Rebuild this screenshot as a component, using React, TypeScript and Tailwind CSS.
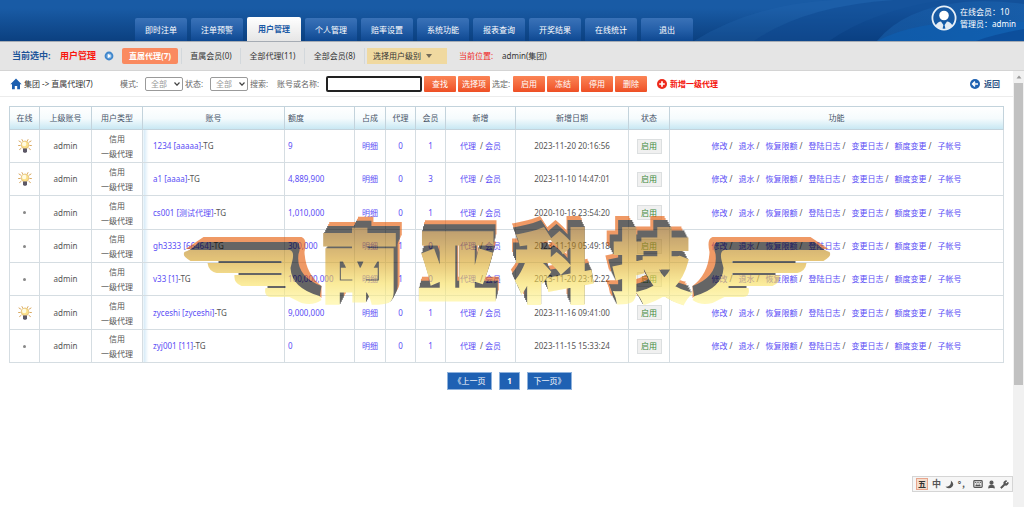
import type { ReactNode } from 'react'
import { User, Wrench, Keyboard } from 'lucide-react'

const tabs = ['即时注单', '注单预警', '用户管理', '个人管理', '赔率设置', '系统功能', '报表查询', '开奖结果', '在线统计', '退出']

const functions = ['修改', '退水', '恢复限额', '登陆日志', '变更日志', '额度变更', '子帐号']

interface Agent {
  online: boolean
  account: string
  quota: string
  agents: number
  members: number
  created: string
}

const agents: Agent[] = [
  { online: true, account: '1234 [aaaaa]', quota: '9', agents: 0, members: 1, created: '2023-11-20 20:16:56' },
  { online: true, account: 'a1 [aaaa]', quota: '4,889,900', agents: 0, members: 3, created: '2023-11-10 14:47:01' },
  { online: false, account: 'cs001 [测试代理]', quota: '1,010,000', agents: 0, members: 1, created: '2020-10-16 23:54:20' },
  { online: false, account: 'gh3333 [66464]', quota: '300,000', agents: 1, members: 0, created: '2023-11-19 05:49:18' },
  { online: false, account: 'v33 [1]', quota: '100,000,000', agents: 1, members: 0, created: '2023-11-20 23:12:22' },
  { online: true, account: 'zyceshi [zyceshi]', quota: '9,000,000', agents: 0, members: 1, created: '2023-11-16 09:41:00' },
  { online: false, account: 'zyj001 [11]', quota: '0', agents: 0, members: 1, created: '2023-11-15 15:33:24' },
]

const columns = [
  { title: '在线', width: 'w-[30px]' },
  { title: '上级账号', width: 'w-[52px]' },
  { title: '用户类型', width: 'w-[51px]' },
  { title: '账号', width: 'w-[142px]' },
  { title: '额度', width: 'w-[70px]' },
  { title: '占成', width: 'w-[31px]' },
  { title: '代理', width: 'w-[30px]' },
  { title: '会员', width: 'w-[30px]' },
  { title: '新增', width: 'w-[70px]' },
  { title: '新增日期', width: 'w-[113px]' },
  { title: '状态', width: 'w-[41px]' },
  { title: '功能', width: '' },
]

function Link({ children }: { children: ReactNode }) {
  return (
    <a href="#" className="text-[#5a4df5]">
      {children}
    </a>
  )
}

function Bulb() {
  return (
    <svg viewBox="0 0 14 14" className="mx-auto size-[14px]">
      <g stroke="#d9a860" strokeWidth="1" strokeLinecap="round">
        <path d="M1 2l1.6 1M.6 6.5h1.6M1.6 10.5l1.4-1M13 2l-1.6 1M13.4 6.5h-1.6M12.4 10.5l-1.4-1M4 .6l.5 1M10 .6l-.5 1" />
      </g>
      <circle cx="7" cy="5.8" r="3.9" fill="#fbe08a" stroke="#d8b070" strokeWidth=".6" />
      <circle cx="6.2" cy="5" r="2.2" fill="#fffbe2" />
      <path d="M5 9.4h4v2.8L8.200 13.800H5.800L5 12.200z" fill="#5c5866" />
    </svg>
  )
}

function HeaderBackdrop() {
  return (
    <svg viewBox="0 0 400 41" preserveAspectRatio="none" className="absolute top-0 right-0 h-full w-[400px]">
      <defs>
        <linearGradient id="swoosh" x1="0" y1="0" x2="1" y2="1">
          <stop offset="0" stopColor="#1d63ad" stopOpacity=".3" />
          <stop offset="1" stopColor="#1c6dbd" stopOpacity=".65" />
        </linearGradient>
      </defs>
      <path d="M70 41Q130 4 210 0H320Q250 10 205 41z" fill="#2468b0" opacity=".3" />
      <path d="M130 41Q180 6 270 0H400V41z" fill="#0a4088" opacity=".35" />
      <path d="M253 41Q280 8 340 2Q370 0 400 4V41z" fill="url(#swoosh)" />
      <path d="M253 41Q300 16 400 22V41z" fill="#0c61b8" opacity=".5" />
      <path d="M352 41Q372 34 400 29V41z" fill="#0a4590" opacity=".6" />
    </svg>
  )
}

function Header() {
  return (
    <header className="relative flex h-[42px] items-end justify-between border-b border-[#a6acb4] bg-linear-to-b from-[#195ba5] from-20% to-[#0b4080]">
      <HeaderBackdrop />
      <nav className="relative ml-[135px] flex items-end gap-1">
        {tabs.map((tab) =>
          tab === '用户管理' ? (
            <a key={tab} href="#" className="flex h-[24px] w-[54px] items-center justify-center rounded-t-xs bg-linear-to-b from-white to-[#e6e6e6] font-bold text-[#1d5ba6]">
              {tab}
            </a>
          ) : (
            <a key={tab} href="#" className="flex h-[23px] w-[52px] items-center justify-center rounded-t-xs bg-linear-to-b from-[#3a72b8] via-[#2560a9] via-50% to-[#0e4891] text-white">
              {tab}
            </a>
          ),
        )}
      </nav>
      <div className="relative flex items-center gap-[3px] self-start pt-[5px] pr-[8px] text-white">
        <svg viewBox="0 0 26 26" className="size-[26px]">
          <circle cx="13" cy="13" r="11.6" fill="none" stroke="#e8f0f8" strokeWidth="1.8" />
          <circle cx="13" cy="10.5" r="4.8" fill="#fff" />
          <path d="M4.5 20.5Q7 16.5 10 16.5L12.4 20L11.4 24.6Q7 24 4.5 20.5zM21.5 20.5Q19 16.5 16 16.5L13.6 20L14.6 24.6Q19 24 21.5 20.5z" fill="#e3ebf4" />
        </svg>
        <div className="leading-[12px]">
          <p>在线会员：10</p>
          <p>管理员：admin</p>
        </div>
      </div>
    </header>
  )
}

function SubNav() {
  return (
    <div className="flex h-[29px] items-center border-b border-[#d4d4d4] bg-[#e5e5e5] pb-[1px] pl-[12px] text-[#333]">
      <span className="w-[48px] text-[9px] font-bold text-[#1d5499]">当前选中:</span>
      <span className="text-[9px] font-bold text-[#f9150c]">用户管理</span>
      <svg viewBox="0 0 10 10" className="ml-[8px] size-[10px]">
        <circle cx="5" cy="5" r="4.4" fill="#3f86cc" />
        <circle cx="5" cy="5" r="2.5" fill="#8fbde6" />
        <path d="M4 3l3 2-3 2z" fill="#fff" />
      </svg>
      <nav className="ml-[8px] flex items-center">
        <a href="#" className="flex h-[16px] w-[56px] items-center justify-center rounded-xs bg-[#fa8a60] font-bold text-white">直属代理(7)</a>
        <a href="#" className="ml-[3px] w-[59px] border-l border-[#d3d8dc] text-center leading-[16px]">直属会员(0)</a>
        <a href="#" className="w-[64px] border-l border-[#d3d8dc] text-center leading-[16px]">全部代理(11)</a>
        <a href="#" className="w-[60px] border-l border-[#d3d8dc] text-center leading-[16px]">全部会员(8)</a>
      </nav>
      <div className="border-l border-[#d3d8dc] pl-[2px]">
        <button className="flex h-[16px] w-[80px] items-center gap-[5px] bg-[#f0d9a0] pl-[6px]">
          选择用户级别
          <svg viewBox="0 0 6 4" className="h-[4px] w-[6px]">
            <path d="M0 0h6L3 4z" fill="#736b57" />
          </svg>
        </button>
      </div>
      <span className="ml-[12px] w-[43px] text-[#f0231c]">当前位置:</span>
      <span>admin(集团)</span>
    </div>
  )
}

function ActionButton({ children }: { children: ReactNode }) {
  return (
    <button className="h-[16px] w-[32px] rounded-[1px] bg-linear-to-b from-[#fb8455] to-[#ee4f24] text-white">
      {children}
    </button>
  )
}

function FilterSelect({ id }: { id: string }) {
  return (
    <span className="relative flex items-center">
      <select id={id} className="h-[14px] w-[38px] appearance-none rounded-xs border border-[#9a9a9a] bg-white pl-[5px] text-[#999]">
        <option>全部</option>
      </select>
      <svg viewBox="0 0 6 4" className="pointer-events-none absolute right-[3px] h-[4px] w-[6px]">
        <path d="M.5.5L3 3.2L5.5.5" fill="none" stroke="#444" strokeWidth="1.2" />
      </svg>
    </span>
  )
}

function Toolbar() {
  return (
    <form className="flex h-[26px] items-center border-b border-[#ececec] pr-[13px] pl-[10px] text-[#666]">
      <svg viewBox="0 0 12 12" className="size-[12px]">
        <path d="M6 .6L11.6 6.2H10V11.2H7.2V8H4.8V11.2H2V6.2H.4z" fill="#1c5fb0" />
      </svg>
      <span className="ml-[2px] w-[96px] text-[#333]">集团 -&gt; 直属代理(7)</span>
      <label htmlFor="mode" className="w-[25px]">模式:</label>
      <FilterSelect id="mode" />
      <label htmlFor="status" className="ml-[2px] w-[25px]">状态:</label>
      <FilterSelect id="status" />
      <span className="ml-[2px] w-[27px]">搜索:</span>
      <label htmlFor="keyword" className="w-[49px]">账号或名称:</label>
      <input id="keyword" type="text" className="h-[16px] w-[96px] rounded-xs border-2 border-[#222] bg-white px-1" />
      <div className="ml-[2px] flex items-center gap-[2px]">
        <ActionButton>查找</ActionButton>
        <ActionButton>选择项</ActionButton>
        <span className="w-[19px]">选定:</span>
        <ActionButton>启用</ActionButton>
        <ActionButton>冻结</ActionButton>
        <ActionButton>停用</ActionButton>
        <ActionButton>删除</ActionButton>
      </div>
      <a href="#" className="ml-[10px] flex items-center gap-[3px] font-bold text-[#f5140c]">
        <svg viewBox="0 0 10 10" className="size-[10px]">
          <circle cx="5" cy="5" r="5" fill="#ee2a1c" />
          <path d="M5 2.2v5.6M2.2 5h5.6" stroke="#fff" strokeWidth="1.7" />
        </svg>
        新增一级代理
      </a>
      <a href="#" className="ml-auto flex items-center gap-[4px] font-bold text-[#2d5486]">
        <svg viewBox="0 0 10 10" className="size-[10px]">
          <circle cx="5" cy="5" r="5" fill="#1f62b2" />
          <path d="M8 5H3M5 2.6L2.6 5L5 7.4" fill="none" stroke="#fff" strokeWidth="1.5" />
        </svg>
        返回
      </a>
    </form>
  )
}

function AgentTable() {
  return (
    <table className="w-full table-fixed border-collapse text-center text-[#555] [&_td]:border [&_td]:border-[#d5dde2] [&_th]:border [&_th]:border-[#c3d3dc]">
      <thead>
        <tr className="h-[23px] bg-linear-to-b from-white via-[#f5fbfd] to-[#c4e6f2] text-[#475468]">
          {columns.map(({ title, width }) => (
            <th key={title} className={`${width} font-normal ${title === '额度' ? 'pl-[3px] text-left' : ''}`}>
              {title}
            </th>
          ))}
        </tr>
      </thead>
      <tbody>
        {agents.map((agent) => (
          <tr key={agent.account} className="h-[33px] nth-[3n]:h-[34px]">
            <td>{agent.online ? <Bulb /> : <span className="mx-auto block size-[3px] rounded-full bg-[#888]" />}</td>
            <td>admin</td>
            <td className="leading-[15px]">
              信用
              <br />
              一级代理
            </td>
            <td className="bg-linear-to-r from-[#d3e9f6] to-white to-[5px] pl-[10px] text-left">
              <Link>{agent.account}</Link>-TG
            </td>
            <td className="pl-[3px] text-left">
              <Link>{agent.quota}</Link>
            </td>
            <td>
              <Link>明细</Link>
            </td>
            <td>
              <Link>{agent.agents}</Link>
            </td>
            <td>
              <Link>{agent.members}</Link>
            </td>
            <td>
              <Link>代理</Link>&nbsp; / <Link>会员</Link>
            </td>
            <td>{agent.created}</td>
            <td>
              <button className="h-[15px] w-[25px] border border-[#dcdfe0] bg-[#f0f0f0] text-[#3d8a3d]">启用</button>
            </td>
            <td>
              <div className="flex justify-center gap-[6px]">
                {functions.map((name, i) => (
                  <span key={name}>
                    <Link>{name}</Link>
                    {i < functions.length - 1 && <span className="pl-[2px]">/</span>}
                  </span>
                ))}
              </div>
            </td>
          </tr>
        ))}
      </tbody>
    </table>
  )
}

// each letter leans towards the middle of the sign
const signLetters = [
  { id: 'nan', char: '南', x: 176, lean: 6 },
  { id: 'ya', char: '亚', x: 274, lean: 3 },
  { id: 'ke', char: '科', x: 371, lean: -4 },
  { id: 'ji', char: '技', x: 468, lean: -7 },
]

// back to front: orange slices, then dark ones
const slices = [
  { depth: 11, color: '#e65700' },
  { depth: 9, color: '#e65700' },
  { depth: 7, color: '#000' },
  { depth: 5, color: '#000' },
  { depth: 3, color: '#000' },
  { depth: 1, color: '#000' },
]

function Extrusion({ id, lean }: { id: string; lean: number }) {
  return (
    <filter id={id} x="-20%" y="-20%" width="140%" height="140%" colorInterpolationFilters="sRGB">
      {slices.map(({ depth, color }) => [
        <feOffset key={`o${depth}`} in="SourceAlpha" dx={(lean * depth) / 11} dy={-depth} result={`shape${depth}`} />,
        <feFlood key={`f${depth}`} floodColor={color} />,
        <feComposite key={`c${depth}`} in2={`shape${depth}`} operator="in" result={`side${depth}`} />,
      ])}
      <feMerge>
        {slices.map(({ depth }) => (
          <feMergeNode key={depth} in={`side${depth}`} />
        ))}
        <feMergeNode in="SourceGraphic" />
      </feMerge>
    </filter>
  )
}

function Wing() {
  return (
    <>
      <path d="M2 31L20 19H118Q124 21 121 34Q122 56 138 68V80L112 60L108 32z" fill="#e65700" />
      <path d="M1 36L16 24H114Q118 27 115 36Q112 58 138 68L136 80Q108 78 106 56V40z" fill="#000" />
      <path
        d="M6 32H106Q111 33 109 42L107 50Q108 70 136 78L138 82Q130 88 118 85L106 79H87Q80 78 82 70H102V68H58Q50 65 51 57H98V55H33Q25 53 24 45H98V43H7Q-2 38 1 34z"
        fill="url(#signGold)"
      />
      <path d="M35 44H98M55 56H98M84 69H102" stroke="#000" strokeWidth="2" />
    </>
  )
}

function GoldSign() {
  return (
    <svg viewBox="0 -24 647 130" className="pointer-events-none absolute top-[123px] left-1/2 w-[647px] -translate-x-1/2 opacity-60">
      <defs>
        <linearGradient id="signGold" gradientUnits="userSpaceOnUse" x1="0" y1="10" x2="0" y2="84">
          <stop offset="0" stopColor="#8f5a10" />
          <stop offset=".45" stopColor="#d6a020" />
          <stop offset=".75" stopColor="#f8de58" />
          <stop offset="1" stopColor="#fff490" />
        </linearGradient>
        {signLetters.map(({ id, lean }) => (
          <Extrusion key={id} id={id} lean={lean} />
        ))}
      </defs>
      <Wing />
      <g transform="matrix(-1 0 0 1 647 0)">
        <Wing />
      </g>
      <g textAnchor="middle" fill="url(#signGold)" stroke="url(#signGold)" strokeWidth="3" className="font-['Noto_Sans_CJK_SC',sans-serif] text-[78px] font-black">
        {signLetters.map(({ id, char, x }) => (
          <text key={id} x={x} y="78" filter={`url(#${id})`}>
            {char}
          </text>
        ))}
      </g>
    </svg>
  )
}

function Pagination() {
  return (
    <nav className="mt-[9px] flex justify-center gap-[7px] pl-[6px] text-white">
      <a href="#" className="flex h-[18px] w-[45px] items-center justify-center border border-[#8fb2dc] bg-[#1f61b3]">《上一页</a>
      <a href="#" className="flex h-[18px] w-[21px] items-center justify-center border border-[#8fb2dc] bg-[#1f61b3] font-bold">1</a>
      <a href="#" className="flex h-[18px] w-[45px] items-center justify-center border border-[#8fb2dc] bg-[#1f61b3]">下一页》</a>
    </nav>
  )
}

function InputMethodBar() {
  return (
    <div className="absolute right-0 bottom-[15px] flex h-[16px] w-[101px] items-center justify-between border border-[#d5d5d5] bg-[#f6f6f6] px-[3px] text-[#555]">
      <span className="flex size-[12px] items-center justify-center border border-[#e8a58c] bg-[#f3dccb] font-bold text-[#333]">五</span>
      <span className="text-[9px] font-bold">中</span>
      <svg viewBox="0 0 10 10" className="size-[9px]">
        <path d="M6.5.5Q11 4 8 7.5Q4.5 11 .5 7.5Q7.5 7.5 6.5.5z" fill="#555" />
      </svg>
      <span className="font-bold">°，</span>
      <Keyboard className="size-[10px]" strokeWidth={3} />
      <User className="size-[9px] fill-current" strokeWidth={3} />
      <Wrench className="size-[9px] fill-current" />
    </div>
  )
}

function ScrollTrack() {
  return (
    <div className="flex w-[11px] flex-col items-center bg-[#f1f1f1]">
      <svg viewBox="0 0 6 12" className="h-[12px] w-[6px]">
        <path d="M.5 7.5h5L3 4.5z" fill="#999" />
      </svg>
      <div className="h-[302px] w-[9px] bg-[#c1c1c1]" />
    </div>
  )
}

export default function App() {
  return (
    <div className="flex min-h-screen flex-col bg-white font-['Noto_Sans','Noto_Sans_CJK_SC',sans-serif] text-[8px] leading-[12px] whitespace-nowrap">
      <Header />
      <SubNav />
      <div className="flex flex-1">
        <main className="relative min-w-0 flex-1">
          <Toolbar />
          <div className="pt-[9px] pr-[9px] pl-[9px]">
            <AgentTable />
          </div>
          <Pagination />
          <GoldSign />
          <InputMethodBar />
        </main>
        <ScrollTrack />
      </div>
    </div>
  )
}
